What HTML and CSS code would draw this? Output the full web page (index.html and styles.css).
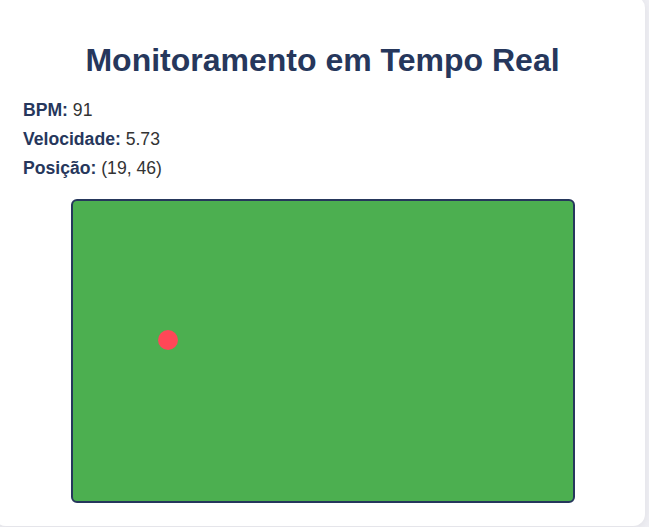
FILE: index.html
```html
<!DOCTYPE html>
<html lang="pt-BR">
<head>
<meta charset="utf-8">
<title>Monitoramento em Tempo Real</title>
<link rel="stylesheet" href="styles.css">
</head>
<body>
<div class="card">
  <h1 class="title">Monitoramento em Tempo Real</h1>
  <p class="stat"><strong>BPM:</strong> 91</p>
  <p class="stat"><strong>Velocidade:</strong> 5.73</p>
  <p class="stat"><strong>Posição:</strong> (19, 46)</p>
  <div class="field">
    <div class="player" style="left: 95px; top: 138px;"></div>
  </div>
</div>
</body>
</html>
```
FILE: styles.css
```css
html, body {
  margin: 0;
  padding: 0;
}
body {
  background: #eeeef3;
  font-family: "Liberation Sans", Arial, sans-serif;
  overflow: hidden;
  height: 527px;
}
.card {
  background: #ffffff;
  border-radius: 12px;
  margin: -4px 4px 0 -6px;
  padding: 24px 23px 23px 29px;
  box-shadow: 0 2px 8px rgba(0, 0, 0, 0.06);
}
.title {
  font-size: 32px;
  font-weight: bold;
  color: #26375c;
  text-align: center;
  margin: 21.5px 0 21.44px;
  line-height: normal;
}
.stat {
  font-size: 17.6px;
  color: #333333;
  margin: 8px 0;
}
.stat strong {
  color: #26375c;
}
.field {
  position: relative;
  width: 500px;
  height: 300px;
  margin: 20px auto 0;
  background: #4caf50;
  border: 2px solid #26375c;
  border-radius: 6px;
}
.player {
  position: absolute;
  width: 20px;
  height: 20px;
  margin: -9px 0 0 -10px;
  border-radius: 50%;
  background: #ff4757;
}
```
